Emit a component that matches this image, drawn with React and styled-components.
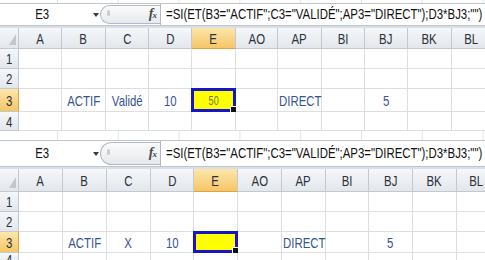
import React from 'react';
import styled, { createGlobalStyle, css } from 'styled-components';

const FONT = `"Liberation Sans", Arial, sans-serif`;

const Global = createGlobalStyle`
  html, body { margin: 0; padding: 0; background: #fff; }
  body { width: 485px; height: 260px; overflow: hidden; font-family: ${FONT}; }
  #root { width: 485px; height: 260px; overflow: hidden; }
`;

/* Arial Narrow look: condensed rendering of Liberation Sans */
const Narrow = styled.span`
  display: inline-block;
  white-space: nowrap;
  transform: scaleX(${(p) => p.$sx || 0.76});
  transform-origin: ${(p) => (p.$left ? 'left center' : 'center center')};
`;

const Page = styled.div`
  display: flex;
  flex-direction: column;
  width: 485px;
`;

const Panel = styled.section`
  display: flex;
  flex-direction: column;
`;

const Strip = styled.div`
  height: ${(p) => p.$h}px;
  background-color: #fff;
  background-image: linear-gradient(to left, #e2e4e7 1px, transparent 1px);
  background-size: 60.8px 100%;
  background-position: -2.8px 0;
`;

const FormulaBar = styled.div`
  box-sizing: border-box;
  height: ${(p) => p.$h}px;
  display: flex;
  align-items: stretch;
  background: #fff;
  border-top: 1px solid #bfc5cd;
  border-bottom: 1px solid #bfc5cd;
`;

const NameBox = styled.div`
  width: 100px;
  display: flex;
  align-items: center;
  font-size: 15px;
  color: #111;
`;

const NameValue = styled.span`
  flex: 0 0 85px;
  text-align: center;
  padding-bottom: 2px;
`;

const DropArrow = styled.span`
  width: 0;
  height: 0;
  margin-left: 8px;
  border-left: 3px solid transparent;
  border-right: 3px solid transparent;
  border-top: 4px solid #3a3a3a;
`;

const Pill = styled.div`
  box-sizing: border-box;
  width: 60px;
  margin: 1px 0;
  display: flex;
  align-items: center;
  justify-content: space-between;
  padding: 0 4px 0 6px;
  border: 1px solid #b3b9c2;
  border-right: none;
  border-radius: 12px 0 0 12px;
  background: linear-gradient(#fbfbfc, #e6e9ed);
`;

const Grip = styled.span`
  width: 3px;
  height: 6px;
  border-radius: 2px;
  background: #c9ced5;
  margin-top: -4px;
`;

const FxButton = styled.span`
  font-family: "Liberation Serif", "DejaVu Serif", serif;
  font-style: italic;
  font-weight: bold;
  font-size: 14px;
  color: #4a4a4a;
  letter-spacing: -1px;
  padding-bottom: 2px;
`;

const FxSub = styled.span`
  font-size: 9px;
`;

const FormulaInput = styled.div`
  flex: 1;
  min-width: 0;
  display: flex;
  align-items: center;
  padding-left: 5px;
  border-left: 1px solid #b3b9c2;
  font-size: 14px;
  color: #111;
  white-space: nowrap;
  overflow: hidden;
  padding-bottom: 1px;
`;

const BarGap = styled.div`
  height: 2px;
  background: #d9dfe6;
`;

const Grid = styled.div`
  display: grid;
  grid-template-columns: ${(p) => p.$cols};
  grid-template-rows: ${(p) => p.$rows};
  overflow: hidden;
`;

const headerBase = css`
  box-sizing: border-box;
  display: flex;
  align-items: center;
  justify-content: center;
  font-size: 15px;
  color: #2c3038;
  border-right: 1px solid #c3c9d1;
  border-bottom: 1px solid #c3c9d1;
  background: ${(p) =>
    p.$active
      ? 'linear-gradient(#fde6ab, #f5c666)'
      : 'linear-gradient(#f5f7f9, #e3e7ec)'};
`;

const Corner = styled.div`
  ${headerBase};
  justify-content: flex-end;
  align-items: flex-end;
  padding: 0 2px 3px 0;
`;

const CornerTriangle = styled.span`
  width: 0;
  height: 0;
  border-left: 7px solid transparent;
  border-bottom: 11px solid #c2c7ce;
`;

const ColHeader = styled.div`
  ${headerBase};
  ${(p) => p.$active && 'border-bottom-color: #e3a23e;'}
`;

const RowHeader = styled.div`
  ${headerBase};
  ${(p) => p.$active && 'border-right-color: #e3a23e;'}
`;

const Cell = styled.div`
  box-sizing: border-box;
  position: relative;
  display: flex;
  align-items: center;
  justify-content: ${(p) => (p.$left ? 'flex-start' : 'center')};
  padding-left: ${(p) => (p.$left ? '1px' : '0')};
  font-size: 15px;
  color: #34558e;
  white-space: nowrap;
  border-right: 1px solid #dcdee0;
  border-bottom: 1px solid #dcdee0;
  background: ${(p) => (p.$fill ? '#ffff00' : '#fff')};
`;

const SmallValue = styled.span`
  font-size: 12px;
  color: #74742c;
  padding-top: 2px;
`;

const Selection = styled.div`
  position: absolute;
  top: -1px;
  left: -1px;
  right: -1px;
  bottom: -1px;
  border: 3px solid #1616c8;
  pointer-events: none;
`;

const FillHandle = styled.div`
  position: absolute;
  right: -3px;
  bottom: -3px;
  width: 5px;
  height: 5px;
  background: #111;
  border: 1px solid #fff;
  border-right: none;
  border-bottom: none;
`;

const COLS = ['A', 'B', 'C', 'D', 'E', 'AO', 'AP', 'BI', 'BJ', 'BK', 'BL'];
const FORMULA = '=SI(ET(B3="ACTIF";C3="VALIDÉ";AP3="DIRECT");D3*BJ3;"")';

const panels = [
  {
    strip: 3,
    bar: 23,
    widths: [19, 43, 44, 43, 43, 44, 42, 44, 43, 43, 44, 40],
    rows: [21, 20, 20, 23, 19],
    row3: { B: 'ACTIF', C: 'Validé', D: '10', E: '50', AP: 'DIRECT', BJ: '5' },
  },
  {
    strip: 9,
    bar: 27,
    widths: [19, 44, 44, 44, 43, 44, 44, 44, 43, 44, 44, 40],
    rows: [23, 20, 20, 21, 14],
    row3: { B: 'ACTIF', C: 'X', D: '10', E: '', AP: 'DIRECT', BJ: '5' },
  },
];

function Sheet({ strip, bar, widths, rows, row3 }) {
  const cols = widths.map((w) => `${w}px`).join(' ');
  const rowTpl = rows.map((h) => `${h}px`).join(' ');
  return (
    <Panel>
      <Strip $h={strip} />
      <FormulaBar $h={bar}>
        <NameBox>
          <NameValue>
            <Narrow>E3</Narrow>
          </NameValue>
          <DropArrow />
        </NameBox>
        <Pill>
          <Grip />
          <FxButton>
            f<FxSub>x</FxSub>
          </FxButton>
        </Pill>
        <FormulaInput>
          <Narrow $left $sx={0.815}>
            {FORMULA}
          </Narrow>
        </FormulaInput>
      </FormulaBar>
      <BarGap />
      <Grid $cols={cols} $rows={rowTpl}>
        <Corner>
          <CornerTriangle />
        </Corner>
        {COLS.map((c) => (
          <ColHeader key={c} $active={c === 'E'}>
            <Narrow>{c}</Narrow>
          </ColHeader>
        ))}
        {[1, 2, 3, 4].map((r) => (
          <React.Fragment key={r}>
            <RowHeader $active={r === 3}>
              <Narrow>{r}</Narrow>
            </RowHeader>
            {COLS.map((c) => {
              const isSel = r === 3 && c === 'E';
              const value = r === 3 ? row3[c] : '';
              const isLeft = c === 'AP';
              return (
                <Cell key={c} $left={isLeft} $fill={isSel}>
                  {value &&
                    (isSel ? (
                      <SmallValue>
                        <Narrow>{value}</Narrow>
                      </SmallValue>
                    ) : (
                      <Narrow $left={isLeft}>{value}</Narrow>
                    ))}
                  {isSel && (
                    <Selection>
                      <FillHandle />
                    </Selection>
                  )}
                </Cell>
              );
            })}
          </React.Fragment>
        ))}
      </Grid>
    </Panel>
  );
}

export default function App() {
  return (
    <Page>
      <Global />
      {panels.map((p, i) => (
        <Sheet key={i} {...p} />
      ))}
    </Page>
  );
}
